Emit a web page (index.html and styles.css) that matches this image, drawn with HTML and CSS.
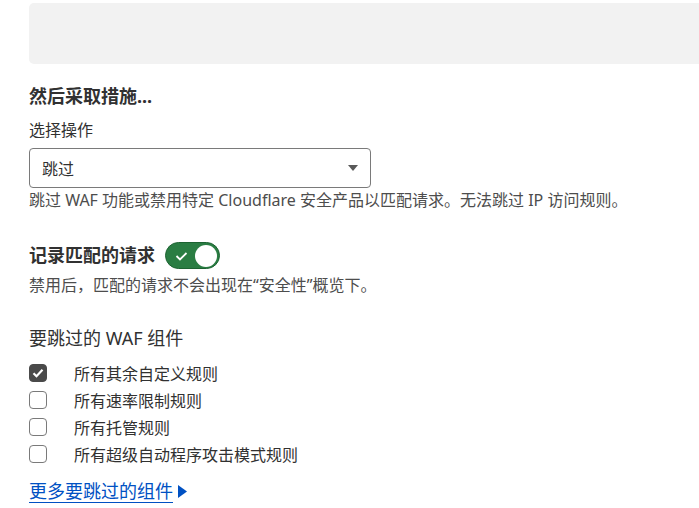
FILE: index.html
```html
<!DOCTYPE html>
<html lang="zh-CN">

<head>
    <meta charset="utf-8">
    <link rel="stylesheet" href="styles.css">
</head>

<body>
    <div class="rule-preview"></div>

    <section class="action">
        <h2 class="section-title">然后采取措施...</h2>
        <label class="field-label">选择操作</label>
        <div class="select">
            <span>跳过</span>
            <svg class="select-arrow" width="10" height="6" viewBox="0 0 10 6">
                <path d="M0 0 L10 0 L5 6 Z" fill="#595959"></path>
            </svg>
        </div>
        <p class="help">跳过 WAF 功能或禁用特定 Cloudflare 安全产品以匹配请求。无法跳过 IP 访问规则。</p>
    </section>

    <section class="logging">
        <div class="toggle-row">
            <h3 class="toggle-title">记录匹配的请求</h3>
            <button class="toggle on">
                <svg class="toggle-check" width="13" height="10" viewBox="0 0 13 10">
                    <path d="M1.5 5 L5 8.5 L11.5 2" fill="none" stroke="#fff" stroke-width="1.8"></path>
                </svg>
                <span class="toggle-knob"></span>
            </button>
        </div>
        <p class="help">禁用后，匹配的请求不会出现在“安全性”概览下。</p>
    </section>

    <section class="components">
        <h3 class="group-title">要跳过的 WAF 组件</h3>
        <ul class="checks">
            <li class="check-row">
                <span class="checkbox checked">
                    <svg width="12" height="10" viewBox="0 0 12 10">
                        <path d="M1.5 5.2 L4.5 8.2 L10.5 1.8" fill="none" stroke="#fff" stroke-width="2.2"></path>
                    </svg>
                </span>
                <span class="check-label">所有其余自定义规则</span>
            </li>
            <li class="check-row">
                <span class="checkbox"></span>
                <span class="check-label">所有速率限制规则</span>
            </li>
            <li class="check-row">
                <span class="checkbox"></span>
                <span class="check-label">所有托管规则</span>
            </li>
            <li class="check-row">
                <span class="checkbox"></span>
                <span class="check-label">所有超级自动程序攻击模式规则</span>
            </li>
        </ul>
        <a class="more-link" href="#"><span class="more-text">更多要跳过的组件</span><svg class="more-arrow" width="9" height="13" viewBox="0 0 9 13">
                <path d="M0 0 L9 6.5 L0 13 Z" fill="#0051c3"></path>
            </svg></a>
    </section>
</body>

</html>
```

FILE: styles.css
```css
html {
    overflow: hidden;
}

body {
    font-family: "Noto Sans", "Noto Sans CJK SC", sans-serif;
    color: #313131;
    background-color: #fff;
    margin: 0;
    padding: 3px 0 0 29px;
}

.rule-preview {
    height: 61px;
    margin-right: -8px;
    background-color: #f2f2f2;
    border-radius: 5px;
}

.section-title {
    font-size: 18px;
    font-weight: 700;
    line-height: 27px;
    margin: 19px 0 8px;
}

.field-label {
    display: block;
    font-size: 16px;
    line-height: 24px;
    margin-bottom: 6px;
}

.select {
    box-sizing: border-box;
    width: 342px;
    height: 40px;
    border: 1px solid #7a7a7a;
    border-radius: 4px;
    padding: 0 12px;
    display: flex;
    align-items: center;
    justify-content: space-between;
    font-size: 16px;
}

.help {
    font-size: 16px;
    line-height: 24px;
    color: #4d4d4d;
    margin: 0;
}

.logging {
    margin-top: 30px;
}

.toggle-row {
    display: flex;
    align-items: center;
    gap: 10px;
    height: 27px;
    margin-bottom: 4px;
}

.toggle-title {
    font-size: 18px;
    font-weight: 700;
    line-height: 27px;
    margin: 0;
}

.toggle {
    box-sizing: border-box;
    width: 55px;
    height: 27px;
    border: 1px solid #1d6332;
    border-radius: 14px;
    background-color: #2a7d43;
    padding: 0 2px 0 9px;
    display: flex;
    align-items: center;
    justify-content: space-between;
    cursor: pointer;
}

.toggle-knob {
    width: 22px;
    height: 22px;
    border-radius: 50%;
    background-color: #fff;
}

.components {
    margin-top: 28px;
}

.group-title {
    font-size: 18px;
    font-weight: 400;
    line-height: 27px;
    margin: 0 0 7px;
}

.checks {
    list-style: none;
    margin: 0;
    padding: 0;
}

.check-row {
    display: flex;
    align-items: center;
    height: 27px;
    font-size: 16px;
}

.checkbox {
    box-sizing: border-box;
    width: 18px;
    height: 18px;
    border: 1.5px solid #7a7a7a;
    border-radius: 4px;
    margin-right: 27px;
    display: flex;
    align-items: center;
    justify-content: center;
}

.checkbox.checked {
    background-color: #4a4a4a;
    border-color: #4a4a4a;
}

.more-link {
    display: inline-flex;
    align-items: center;
    gap: 5px;
    margin-top: 11px;
    font-size: 18px;
    line-height: 27px;
    color: #0051c3;
    text-decoration: none;
}

.more-text {
    text-decoration: underline;
    text-underline-offset: 4px;
}
```
